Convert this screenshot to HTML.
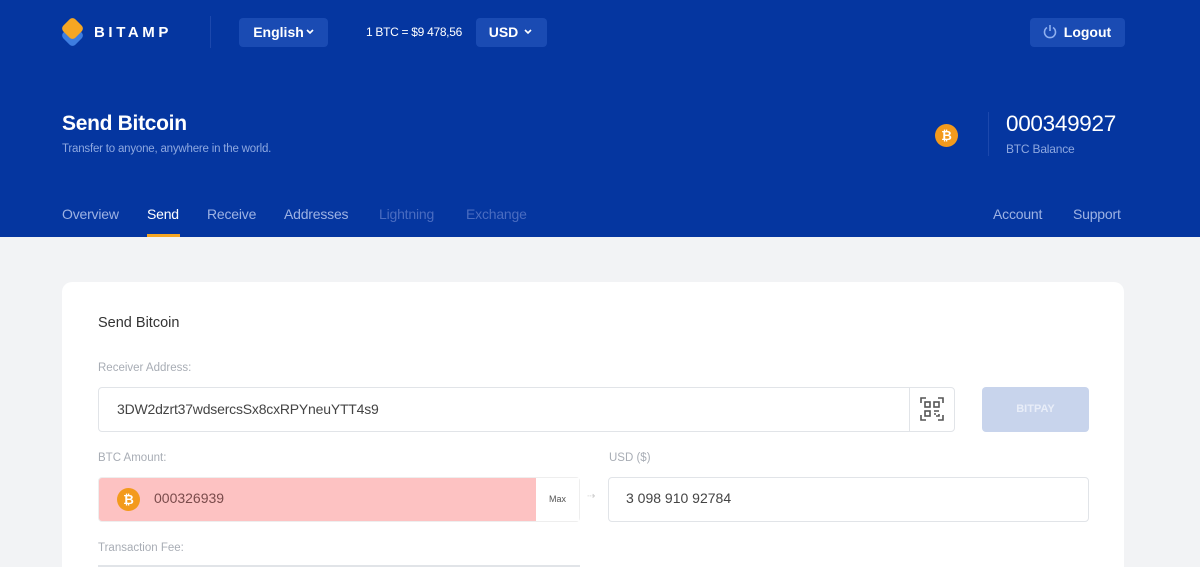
<!DOCTYPE html><html><head><style>
*{margin:0;padding:0;box-sizing:border-box}
html,body{width:1200px;height:567px;overflow:hidden}
body{background:#f2f3f5;font-family:"Liberation Sans",sans-serif;position:relative}
.hdr{position:absolute;left:0;top:0;width:1200px;height:237px;background:#0536a0}
.a{position:absolute}
.btn{background:#1a4bb3;border-radius:4px;color:#fff;font-weight:bold;font-size:14px;text-align:center}
.nav{font-size:14px;color:#9db2e3;top:206px;letter-spacing:-0.2px}
.card{position:absolute;left:62px;top:282px;width:1062px;height:285px;background:#fff;border-radius:10px 10px 0 0}
.lbl{font-size:11.5px;color:#a8adb5}
.inp{border:1px solid #e1e4e8;border-radius:4px;background:#fff}
.coin{border-radius:50%;background:#f39a1c;color:#fff;font-weight:bold;text-align:center}
</style></head><body>
<div class="hdr">
<div class="a" style="left:64px;top:27px;width:17px;height:17px;background:#3d7de0;transform:rotate(45deg);border-radius:4px"></div>
<div class="a" style="left:64px;top:20px;width:17px;height:17px;background:#f5a623;transform:rotate(45deg);border-radius:4px"></div>
<div class="a" style="left:94px;top:24px;color:#fff;font-weight:bold;font-size:15px;letter-spacing:3.6px">BITAMP</div>
<div class="a" style="left:210px;top:16px;width:1px;height:32px;background:#1c48ad"></div>
<div class="a btn" style="left:239px;top:18px;width:89px;height:29px;line-height:29px;padding-right:10px">English</div>
<svg class="a" style="left:306px;top:29px" width="8" height="6"><path d="M1 1l3 3 3-3" stroke="#fff" stroke-width="1.6" fill="none"/></svg>
<div class="a" style="left:366px;top:25px;color:#fff;font-size:12px;letter-spacing:-0.3px">1 BTC = $9 478,56</div>
<div class="a btn" style="left:476px;top:18px;width:71px;height:29px;line-height:29px;padding-right:16px">USD</div>
<svg class="a" style="left:524px;top:29px" width="8" height="6"><path d="M1 1l3 3 3-3" stroke="#fff" stroke-width="1.6" fill="none"/></svg>
<div class="a btn" style="left:1030px;top:18px;width:95px;height:29px;line-height:29px;padding-left:20px">Logout</div>
<svg class="a" style="left:1042px;top:24px" width="16" height="16"><path d="M5 3.5A5.5 5.5 0 1 0 11 3.5" stroke="#8fb0f0" stroke-width="1.6" fill="none"/><path d="M8 1v6" stroke="#8fb0f0" stroke-width="1.6"/></svg>
<div class="a" style="left:62px;top:112px;color:#fff;font-size:21px;font-weight:bold;letter-spacing:-0.3px">Send Bitcoin</div>
<div class="a" style="left:62px;top:143px;color:#8ea8e0;font-size:11.5px;letter-spacing:-0.2px">Transfer to anyone, anywhere in the world.</div>
<div class="a coin" style="left:935px;top:124px;width:23px;height:23px;line-height:23px;font-size:13px">₿</div>
<div class="a" style="left:988px;top:112px;width:1px;height:44px;background:#1c48ad"></div>
<div class="a" style="left:1006px;top:111px;color:#fff;font-size:22.5px;letter-spacing:-0.3px">000349927</div>
<div class="a" style="left:1006px;top:142px;color:#8ea8e0;font-size:12px;letter-spacing:-0.2px">BTC Balance</div>
<div class="a nav" style="left:62px">Overview</div>
<div class="a nav" style="left:147px;color:#fff">Send</div>
<div class="a" style="left:147px;top:234px;width:33px;height:3px;background:#f5a623"></div>
<div class="a nav" style="left:207px">Receive</div>
<div class="a nav" style="left:284px">Addresses</div>
<div class="a nav" style="left:379px;color:#4a6cc0">Lightning</div>
<div class="a nav" style="left:466px;color:#4a6cc0">Exchange</div>
<div class="a nav" style="left:993px">Account</div>
<div class="a nav" style="left:1073px">Support</div>
</div>
<div class="card"></div>
<div class="a" style="left:98px;top:315px;font-size:14.5px;color:#333">Send Bitcoin</div>
<div class="a lbl" style="left:98px;top:362px">Receiver Address:</div>
<div class="a inp" style="left:98px;top:387px;width:857px;height:45px"></div>
<div class="a" style="left:117px;top:401px;font-size:14px;color:#444;letter-spacing:-0.2px">3DW2dzrt37wdsercsSx8cxRPYneuYTT4s9</div>
<div class="a" style="left:909px;top:388px;width:1px;height:43px;background:#e1e4e8"></div>
<svg class="a" style="left:920px;top:397px" width="24" height="24" fill="none" stroke="#555" stroke-width="1.6"><path d="M1 6V1h5M18 1h5v5M23 18v5h-5M6 23H1v-5"/><rect x="5" y="5" width="5" height="5"/><rect x="14" y="5" width="5" height="5"/><rect x="5" y="14" width="5" height="5"/><path d="M14 14h5M14 17h2M19 17v2h-3"/></svg>
<div class="a" style="left:982px;top:387px;width:107px;height:45px;background:#c8d4ec;border-radius:4px;color:#e8edf8;font-weight:bold;font-size:11px;text-align:center;line-height:45px">BITPAY</div>
<div class="a lbl" style="left:98px;top:452px">BTC Amount:</div>
<div class="a" style="left:98px;top:477px;width:482px;height:45px;background:#fdc2c2;border:1px solid #eee;border-radius:4px"></div>
<div class="a" style="left:536px;top:478px;width:43px;height:43px;background:#fff;font-size:9px;color:#555;text-align:center;line-height:43px">Max</div>
<div class="a coin" style="left:117px;top:488px;width:23px;height:23px;line-height:23px;font-size:13px">₿</div>
<div class="a" style="left:154px;top:490px;font-size:14px;color:#7a4b4b">000326939</div>
<div class="a" style="left:587px;top:491px;font-size:10px;color:#ccc">⇢</div>
<div class="a lbl" style="left:609px;top:452px">USD ($)</div>
<div class="a inp" style="left:608px;top:477px;width:481px;height:45px"></div>
<div class="a" style="left:626px;top:490px;font-size:14px;color:#444">3 098 910 92784</div>
<div class="a lbl" style="left:98px;top:542px">Transaction Fee:</div>
<div class="a" style="left:98px;top:565px;width:482px;height:2px;background:#e1e4e8"></div>
</body></html>
